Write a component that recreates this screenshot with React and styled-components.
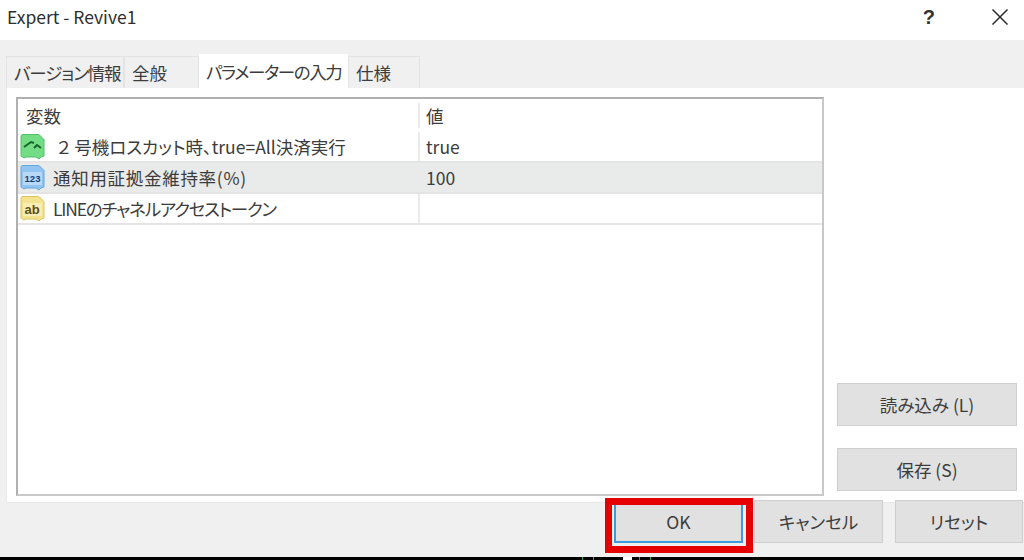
import styled, { createGlobalStyle } from "styled-components";

const GlobalStyle = createGlobalStyle`
  html, body { margin: 0; padding: 0; background: #000; }
  * { box-sizing: border-box; }
`;

const rows = [
  { kind: "bool", name: "２ 号機ロスカット時、true=All決済実行", value: "true", indent: 4 },
  { kind: "num", name: "通知用証拠金維持率(%)", value: "100", selected: true, spacing: 0.7 },
  { kind: "str", name: "LINEのチャネルアクセストークン", value: "", spacing: -1.2 },
];

const iconColors = {
  bool: ["#72dd84", "#52c068"],
  num: ["#92c4f0", "#68a4de"],
  str: ["#f3e38e", "#dcc660"],
};

const RowIcon = ({ kind }) => (
  <IconSvg viewBox="0 0 27 27">
    <path
      d="M3 1.5h17l5 5V23l-3 1-2 2-3-2H7l-2 1-3-2V3z"
      fill={iconColors[kind][0]}
      stroke={iconColors[kind][1]}
      strokeWidth="1"
    />
    {kind === "bool" && (
      <path d="M5 14l7-5 3 1M15 15l3-3 4 3" fill="none" stroke="#17652c" strokeWidth="2" />
    )}
    {kind !== "bool" && <rect x="4" y="8" width="19" height="13" fill="#fff" opacity="0.35" />}
    {kind === "num" && <IconText x="13.5" y="18" fontSize="9.5" fill="#123d78">123</IconText>}
    {kind === "str" && <IconText x="13" y="19" fontSize="13" fill="#5c5020">ab</IconText>}
  </IconSvg>
);

const App = () => (
  <Screen>
    <GlobalStyle />
    <TitleBar>
      <Title>Expert - Revive1</Title>
      <TitleButtons>
        <Help>?</Help>
        <svg width="16" height="16" viewBox="0 0 16 16">
          <path d="M.5.5l15 15M15.5.5l-15 15" stroke="#2a2a2a" strokeWidth="1.5" />
        </svg>
      </TitleButtons>
    </TitleBar>
    <Body>
      <Tabs>
        <Tab $w={118} $spacing={-1.1}>バージョン情報</Tab>
        <Tab $w={75}>全般</Tab>
        <Tab $w={149} $spacing={-1.4} $active>パラメーターの入力</Tab>
        <Tab $w={72}>仕様</Tab>
      </Tabs>
      <Panel>
        <Table>
          <HeaderRow>
            <NameCell>変数</NameCell>
            <ValueCell>値</ValueCell>
          </HeaderRow>
          {rows.map((row) => (
            <Row key={row.kind} $selected={row.selected}>
              <NameCell>
                <RowIcon kind={row.kind} />
                <RowName $indent={row.indent} $spacing={row.spacing}>{row.name}</RowName>
              </NameCell>
              <ValueCell>{row.value}</ValueCell>
            </Row>
          ))}
        </Table>
        <SideButtons>
          <Button>読み込み (L)</Button>
          <Button>保存 (S)</Button>
        </SideButtons>
      </Panel>
      <Footer>
        <OkWrap>
          <OkButton>OK</OkButton>
          <Highlight />
        </OkWrap>
        <FooterButton $w={129}>キャンセル</FooterButton>
        <FooterButton $w={128}>リセット</FooterButton>
      </Footer>
    </Body>
    <ChartStrip />
  </Screen>
);

const font = `"Noto Sans CJK JP", "Noto Sans", sans-serif`;

const Screen = styled.div`
  width: 1024px;
  height: 560px;
  overflow: hidden;
  font-family: ${font};
  font-size: 17.5px;
  font-feature-settings: "palt";
  color: #3c3c3c;
  display: flex;
  flex-direction: column;
`;

const TitleBar = styled.div`
  height: 40px;
  flex: none;
  background: #fff;
  display: flex;
  align-items: center;
  justify-content: space-between;
  padding: 0 16px 7px 7px;
`;

const Title = styled.div`
  color: #2e2e2e;
`;

const TitleButtons = styled.div`
  display: flex;
  align-items: center;
  gap: 57px;
`;

const Help = styled.div`
  font-family: "Liberation Sans", sans-serif;
  font-weight: 700;
  font-size: 20px;
  line-height: 20px;
  color: #333;
`;

const Body = styled.div`
  height: 517px;
  flex: none;
  background: #f0f0f0;
  padding-top: 14px;
`;

const Tabs = styled.div`
  height: 34px;
  padding-left: 6px;
  display: flex;
  align-items: flex-end;
`;

const Tab = styled.div`
  width: ${(p) => p.$w}px;
  height: ${(p) => (p.$active ? 34 : 32)}px;
  background: ${(p) => (p.$active ? "#fff" : "#f0f0f0")};
  border: 1px solid #e4e4e4;
  border-width: ${(p) => (p.$active ? "0" : "1px 1px 0 1px")};
  padding-left: 7px;
  letter-spacing: ${(p) => p.$spacing || 0}px;
  display: flex;
  align-items: center;
  white-space: nowrap;
`;

const Panel = styled.div`
  height: 415px;
  margin-left: 6px;
  background: #fff;
  border-left: 1px solid #e8e8e8;
  border-bottom: 1px solid #e8e8e8;
  padding: 9px 0 6px 9px;
  display: flex;
  gap: 13px;
`;

const Table = styled.div`
  width: 808px;
  height: 399px;
  flex: none;
  border: 2px solid #b0b0b0;
  border-right-color: #c8c8c8;
  border-bottom-color: #c8c8c8;
`;

const HeaderRow = styled.div`
  height: 33px;
  display: grid;
  grid-template-columns: 400px 1fr;
  align-items: center;
`;

const Row = styled.div`
  height: 31px;
  display: grid;
  grid-template-columns: 400px 1fr;
  border-bottom: 2px solid #e4e4e4;
  background: ${(p) => (p.$selected ? "#e9eaea" : "#fff")};
`;

const NameCell = styled.div`
  display: flex;
  align-items: center;
  gap: 7px;
  padding-left: 8px;
  white-space: nowrap;
  ${Row} & {
    padding-left: 1px;
  }
`;

const ValueCell = styled.div`
  display: flex;
  align-items: center;
  padding-left: 6px;
  border-left: 2px solid #eaeaea;
`;

const RowName = styled.span`
  margin-left: ${(p) => p.$indent || 0}px;
  letter-spacing: ${(p) => p.$spacing || 0}px;
`;

const IconSvg = styled.svg`
  width: 27px;
  height: 27px;
  flex: none;
`;

const IconText = styled.text`
  font-family: "Liberation Sans", sans-serif;
  font-weight: 700;
  text-anchor: middle;
`;

const SideButtons = styled.div`
  width: 180px;
  flex: none;
  display: flex;
  flex-direction: column;
  justify-content: flex-end;
  gap: 22px;
  padding-bottom: 5px;
`;

const Button = styled.div`
  height: 43px;
  background: #e1e1e1;
  border: 1px solid #cfcfcf;
  display: flex;
  align-items: center;
  justify-content: center;
`;

const Footer = styled.div`
  margin-top: -3px;
  padding-right: 1px;
  display: flex;
  justify-content: flex-end;
  gap: 12px;
`;

const FooterButton = styled(Button)`
  width: ${(p) => p.$w}px;
`;

const OkWrap = styled.div`
  position: relative;
  margin-right: -1px;
`;

const OkButton = styled(Button)`
  width: 129px;
  border: 2px solid #3c9be0;
`;

const Highlight = styled.div`
  position: absolute;
  left: -9px;
  right: -10px;
  top: -2px;
  bottom: -10px;
  border: 7px solid #e60000;
`;

const ChartStrip = styled.div`
  height: 3px;
  flex: none;
  background:
    linear-gradient(#2fa84a, #2fa84a) 582px 0 / 1px 100% no-repeat,
    linear-gradient(#2fa84a, #2fa84a) 593px 0 / 1px 100% no-repeat,
    linear-gradient(#fff, #fff) 623px 0 / 9px 100% no-repeat,
    linear-gradient(#2fa84a, #2fa84a) 639px 0 / 1px 100% no-repeat,
    linear-gradient(#2fa84a, #2fa84a) 650px 0 / 1px 100% no-repeat,
    #000;
`;

export default App;
